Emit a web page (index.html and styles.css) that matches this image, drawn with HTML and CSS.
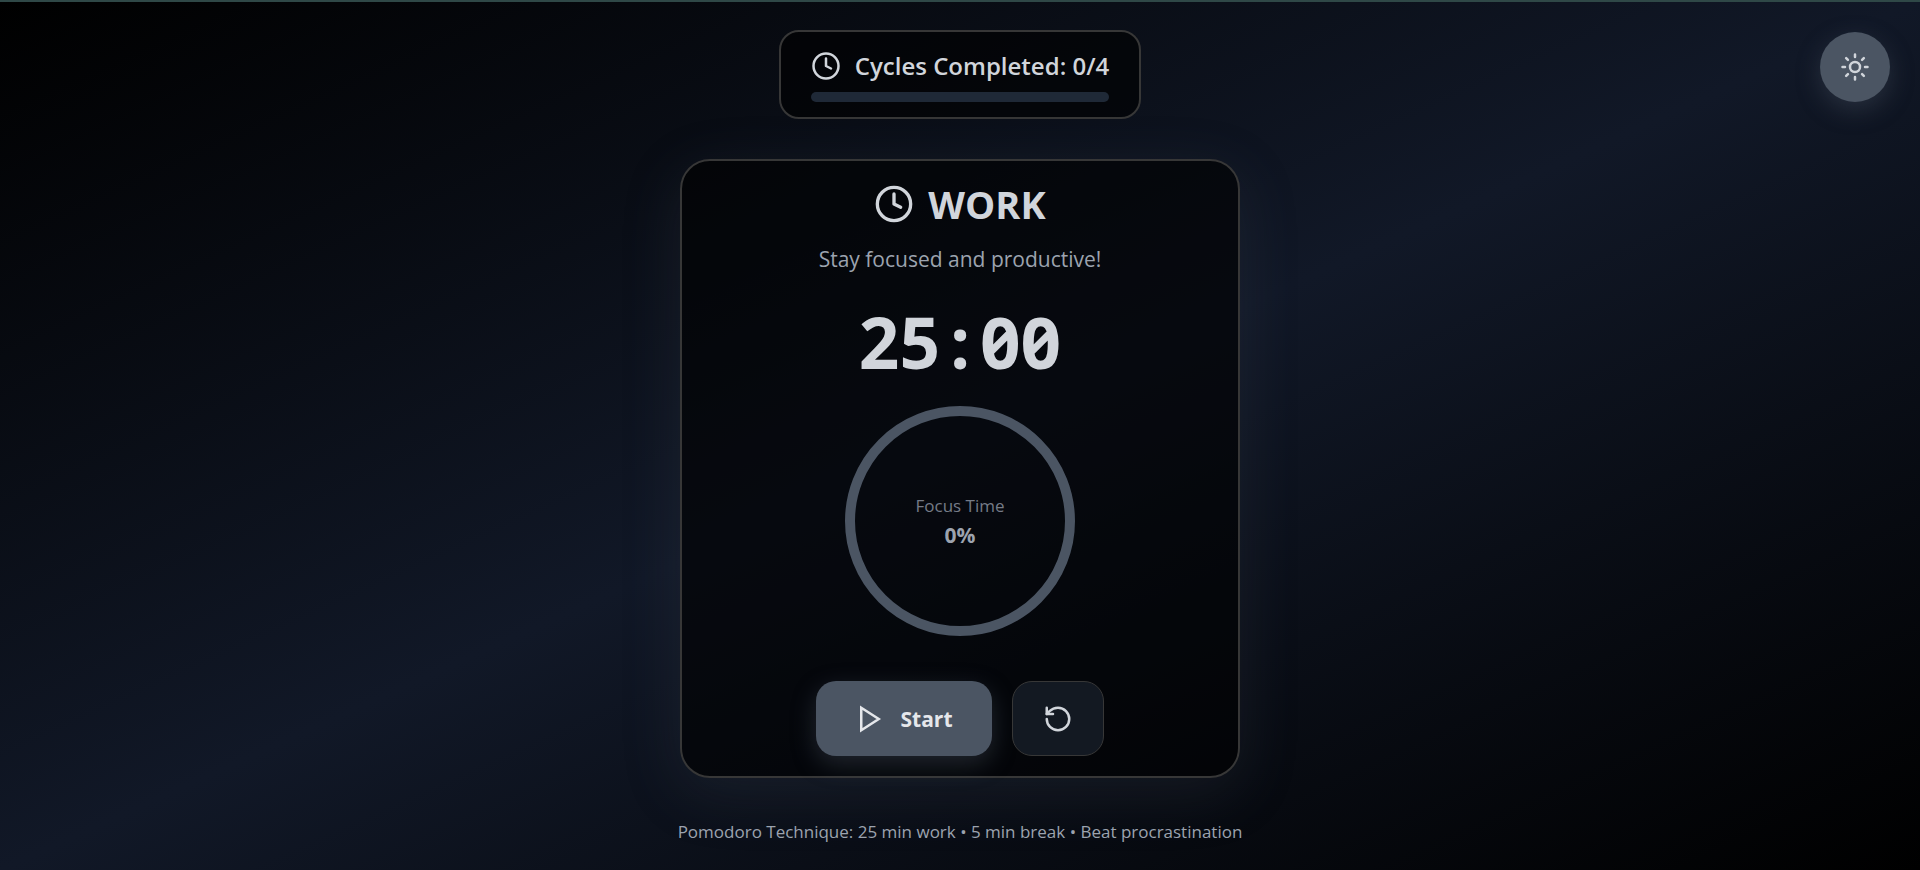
FILE: index.html
```html
<!DOCTYPE html>
<html lang="en">
<head>
<meta charset="utf-8">
<title>Pomodoro Timer</title>
<meta name="viewport" content="width=device-width, initial-scale=1">
<link rel="stylesheet" href="styles.css">
</head>
<body class="page">
  <button class="theme-toggle" type="button" aria-label="Switch to light theme">
    <svg class="icon" viewBox="0 0 24 24" aria-hidden="true"><circle cx="12" cy="12" r="4"/><path d="M12 2v2M12 20v2M4.93 4.93l1.41 1.41M17.66 17.66l1.41 1.41M2 12h2M20 12h2M6.34 17.66l-1.41 1.41M19.07 4.93l-1.41 1.41"/></svg>
  </button>
  <main class="content">
    <section class="cycles">
      <div class="cycles-label">
        <svg class="icon" viewBox="0 0 24 24" aria-hidden="true"><circle cx="12" cy="12" r="10"/><path d="M12 6v6l4 2"/></svg>
        <span>Cycles Completed: 0/4</span>
      </div>
      <div class="cycles-track"></div>
    </section>
    <section class="card">
      <h1 class="mode">
        <svg class="icon icon-large" viewBox="0 0 24 24" aria-hidden="true"><circle cx="12" cy="12" r="10"/><path d="M12 6v6l4 2"/></svg>
        <span>WORK</span>
      </h1>
      <p class="message">Stay focused and productive!</p>
      <div class="time">25<span class="time-colon">:</span>00</div>
      <div class="ring">
        <span class="ring-label">Focus Time</span>
        <span class="ring-value">0%</span>
      </div>
      <div class="controls">
        <button class="button button-start" type="button">
          <svg class="icon icon-play" viewBox="0 0 24 24" aria-hidden="true"><path d="M5 3l14 9-14 9z"/></svg>
          <span>Start</span>
        </button>
        <button class="button button-reset" type="button" aria-label="Reset">
          <svg class="icon" viewBox="0 0 24 24" aria-hidden="true"><path d="M3 12a9 9 0 1 0 9-9 9.75 9.75 0 0 0-6.74 2.74L3 8"/><path d="M3 3v5h5"/></svg>
        </button>
      </div>
    </section>
    <footer class="footer">Pomodoro Technique: 25 min work • 5 min break • Beat procrastination</footer>
  </main>
</body>
</html>
```
FILE: styles.css
```css
* {
  box-sizing: border-box;
}

.page {
  margin: 0;
  min-height: 100vh;
  border-top: 2px solid #2f4847;
  background: linear-gradient(to bottom right, #000 0%, #111827 50%, #000 100%) no-repeat;
  color: #d1d5db;
  font-family: "Segoe UI", "Open Sans", "Noto Sans", sans-serif;
}

.content {
  display: flex;
  flex-direction: column;
  align-items: center;
  padding: 28px 20px 24px;
}

.icon {
  display: block;
  flex: none;
  width: 30px;
  height: 30px;
  fill: none;
  stroke: currentColor;
  stroke-width: 2;
  stroke-linecap: round;
  stroke-linejoin: round;
}

.icon-large {
  width: 40px;
  height: 40px;
}

.icon-play {
  stroke-linejoin: miter;
}

.theme-toggle {
  position: fixed;
  top: 32px;
  right: 30px;
  display: grid;
  place-items: center;
  width: 70px;
  height: 70px;
  padding: 0;
  border: 0;
  border-radius: 50%;
  background: #4b5563;
  color: #d1d5db;
  box-shadow: 0 8px 25px rgba(75, 85, 99, 0.4);
}

.cycles {
  padding: 18px 30px 15px;
  border: 2px solid #373737;
  border-radius: 20px;
  background: rgba(0, 0, 0, 0.6);
}

.cycles-label {
  display: flex;
  align-items: center;
  gap: 14px;
  margin-bottom: 10px;
  font-size: 24px;
  line-height: 32px;
  font-weight: 600;
}

.cycles-track {
  height: 10px;
  border-radius: 5px;
  background: #1f2937;
}

.card {
  display: flex;
  flex-direction: column;
  align-items: center;
  width: 560px;
  max-width: 100%;
  margin-top: 40px;
  padding: 16px 20px 20px;
  border: 2px solid #373737;
  border-radius: 30px;
  background: rgba(0, 0, 0, 0.6);
  box-shadow: 0 15px 60px rgba(75, 85, 99, 0.2);
}

.mode {
  display: flex;
  align-items: center;
  gap: 14px;
  margin: 0 0 12px;
  font-size: 38px;
  line-height: 54px;
  font-weight: 700;
}

.message {
  margin: 0 0 32px;
  color: #9ca3af;
  font-size: 21px;
  line-height: 32px;
}

.time {
  margin-bottom: 29px;
  font-size: 71px;
  line-height: 70px;
  font-weight: 700;
  font-feature-settings: "zero", "tnum";
}

.time-colon {
  display: inline-block;
  width: 40px;
  text-align: center;
}

.ring {
  display: flex;
  flex-direction: column;
  align-items: center;
  justify-content: center;
  width: 230px;
  height: 230px;
  margin-bottom: 45px;
  border: 10px solid #4b5563;
  border-radius: 50%;
}

.ring-label {
  color: #757b87;
  font-size: 17px;
  line-height: 28px;
}

.ring-value {
  color: #9ca3af;
  font-size: 21px;
  line-height: 30px;
  font-weight: 700;
}

.controls {
  display: flex;
  gap: 20px;
}

.button {
  display: flex;
  align-items: center;
  gap: 15px;
  height: 75px;
  border-radius: 20px;
  font: inherit;
  font-size: 21px;
  font-weight: 700;
}

.button-start {
  padding: 0 39px;
  border: 0;
  background: #4b5563;
  color: #e5e7eb;
  box-shadow: 0 8px 25px rgba(75, 85, 99, 0.4);
}

.button-reset {
  padding: 0 30px;
  border: 1px solid #373737;
  background: #131922;
  color: #d1d5db;
}

.footer {
  margin-top: 40px;
  color: #9ca3af;
  font-size: 17px;
  line-height: 28px;
}
```
